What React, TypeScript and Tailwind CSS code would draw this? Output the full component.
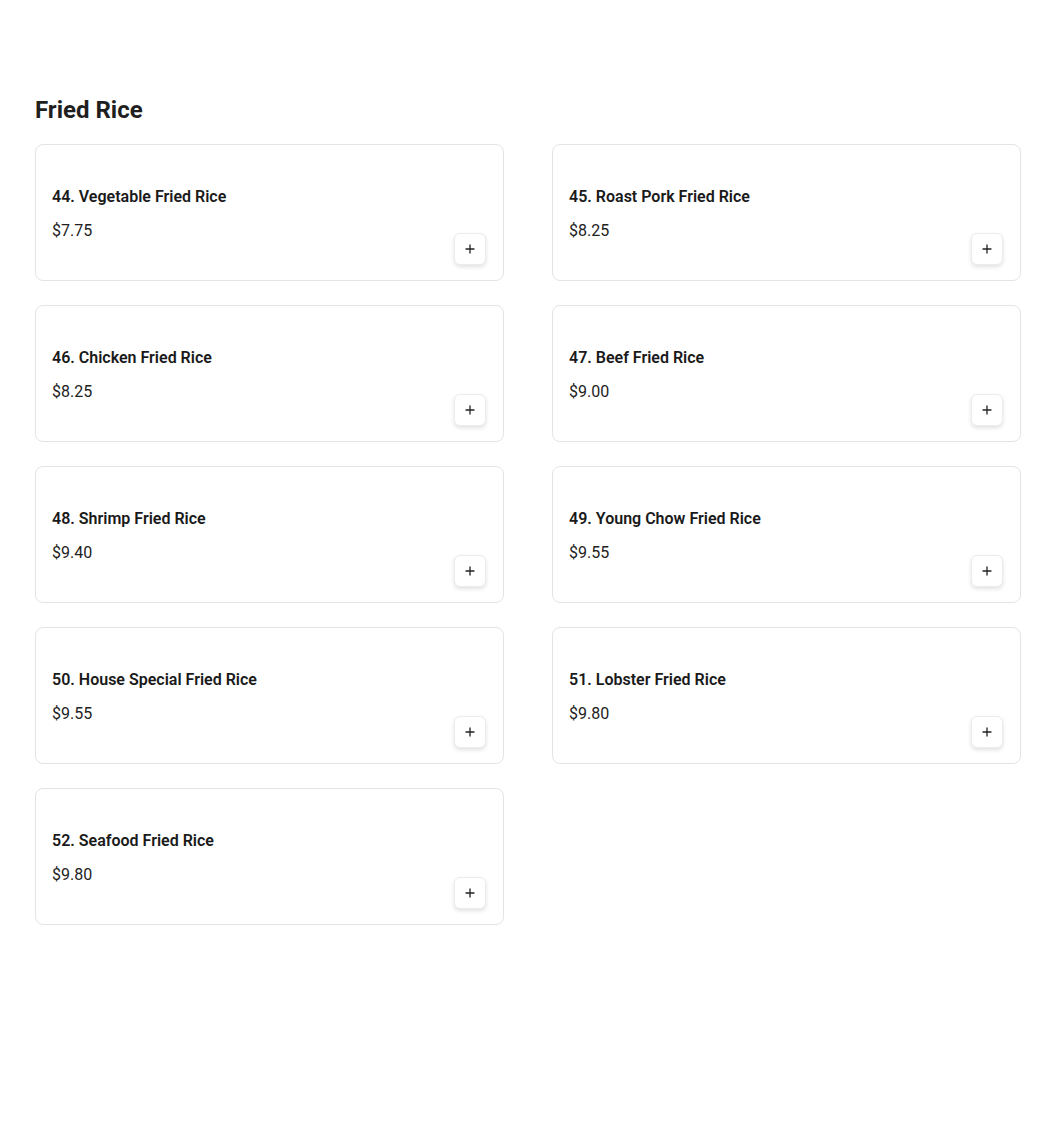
import React from 'react';

const ITEMS = [
  { id: 44, name: "Vegetable Fried Rice", price: "7.75" },
  { id: 45, name: "Roast Pork Fried Rice", price: "8.25" },
  { id: 46, name: "Chicken Fried Rice", price: "8.25" },
  { id: 47, name: "Beef Fried Rice", price: "9.00" },
  { id: 48, name: "Shrimp Fried Rice", price: "9.40" },
  { id: 49, name: "Young Chow Fried Rice", price: "9.55" },
  { id: 50, name: "House Special Fried Rice", price: "9.55" },
  { id: 51, name: "Lobster Fried Rice", price: "9.80" },
  { id: 52, name: "Seafood Fried Rice", price: "9.80" },
];

function PlusIcon() {
  return (
    <svg width="10" height="10" viewBox="0 0 10 10" fill="none" stroke="#222" strokeWidth="1.3" strokeLinecap="round">
      <path d="M5 1v8M1 5h8" />
    </svg>
  );
}

export default function App() {
  return (
    <div className="min-h-screen bg-white pl-[35px] pt-[94px] text-[#1a1a1a]" style={{ fontFamily: 'Roboto, "Liberation Sans", sans-serif' }}>
      <h2 className="text-2xl leading-8 font-bold text-[#1f1f1f]">Fried Rice</h2>
      <div className="mt-[18px] grid grid-cols-[469px_469px] gap-x-[48px] gap-y-[24px]">
        {ITEMS.map((item) => (
          <div key={item.id} className="flex h-[137px] rounded-lg border border-[#e4e4e4] bg-white p-4">
            <div className="mt-[2px] flex flex-1 flex-col justify-center">
              <h3 className="text-base leading-6 font-semibold text-[#1a1a1a]">
                {item.id}. {item.name}
              </h3>
              <p className="mt-[10px] text-base leading-6 text-[#222]">${item.price}</p>
            </div>
            <button className="mr-px -mb-px flex h-8 w-8 items-center justify-center self-end rounded-md border border-[#ececec] bg-white shadow-[0_2px_4px_rgba(0,0,0,0.12)]">
              <PlusIcon />
            </button>
          </div>
        ))}
      </div>
    </div>
  );
}
